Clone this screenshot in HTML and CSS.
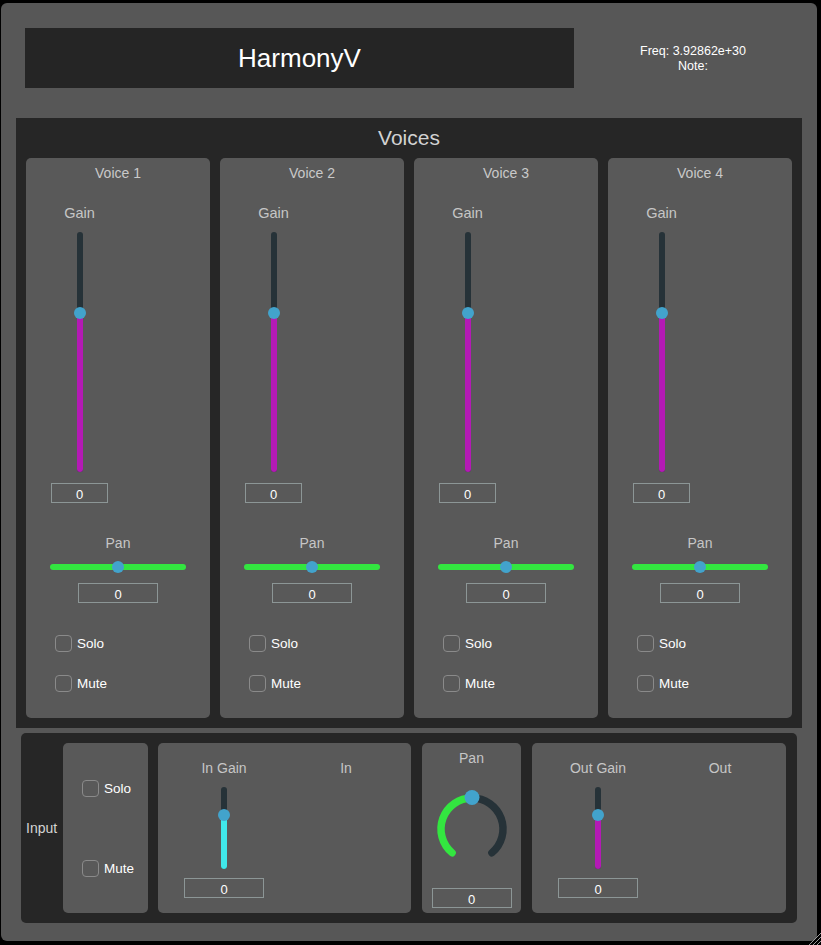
FILE: index.html
```html
<!DOCTYPE html>
<html>
<head>
<meta charset="utf-8">
<link rel="stylesheet" href="styles.css">
</head>
<body>
<div class="panel">
  <div class="header">
    <div class="title-box">HarmonyV</div>
    <div class="freq">
      <div>Freq: 3.92862e+30</div>
      <div>Note:</div>
    </div>
  </div>

  <div class="voices">
    <div class="voices-title">Voices</div>
    <div class="voice-grid">
      <!-- voice 1 -->
      <div class="card voice">
        <div class="voice-title">Voice 1</div>
        <div class="gain-col">
          <div class="label gain-label">Gain</div>
          <div class="vslider tall" style="--pos:33.75%"><div class="vtrack"></div><div class="vfill magenta"></div><div class="thumb"></div></div>
          <div class="numbox small">0</div>
        </div>
        <div class="label pan-label">Pan</div>
        <div class="hslider" style="--pos:50%"><div class="htrack"></div><div class="thumb"></div></div>
        <div class="numbox pan-box">0</div>
        <label class="check solo"><span class="box"></span>Solo</label>
        <label class="check mute"><span class="box"></span>Mute</label>
      </div>
      <!-- voice 2 -->
      <div class="card voice">
        <div class="voice-title">Voice 2</div>
        <div class="gain-col">
          <div class="label gain-label">Gain</div>
          <div class="vslider tall" style="--pos:33.75%"><div class="vtrack"></div><div class="vfill magenta"></div><div class="thumb"></div></div>
          <div class="numbox small">0</div>
        </div>
        <div class="label pan-label">Pan</div>
        <div class="hslider" style="--pos:50%"><div class="htrack"></div><div class="thumb"></div></div>
        <div class="numbox pan-box">0</div>
        <label class="check solo"><span class="box"></span>Solo</label>
        <label class="check mute"><span class="box"></span>Mute</label>
      </div>
      <!-- voice 3 -->
      <div class="card voice">
        <div class="voice-title">Voice 3</div>
        <div class="gain-col">
          <div class="label gain-label">Gain</div>
          <div class="vslider tall" style="--pos:33.75%"><div class="vtrack"></div><div class="vfill magenta"></div><div class="thumb"></div></div>
          <div class="numbox small">0</div>
        </div>
        <div class="label pan-label">Pan</div>
        <div class="hslider" style="--pos:50%"><div class="htrack"></div><div class="thumb"></div></div>
        <div class="numbox pan-box">0</div>
        <label class="check solo"><span class="box"></span>Solo</label>
        <label class="check mute"><span class="box"></span>Mute</label>
      </div>
      <!-- voice 4 -->
      <div class="card voice">
        <div class="voice-title">Voice 4</div>
        <div class="gain-col">
          <div class="label gain-label">Gain</div>
          <div class="vslider tall" style="--pos:33.75%"><div class="vtrack"></div><div class="vfill magenta"></div><div class="thumb"></div></div>
          <div class="numbox small">0</div>
        </div>
        <div class="label pan-label">Pan</div>
        <div class="hslider" style="--pos:50%"><div class="htrack"></div><div class="thumb"></div></div>
        <div class="numbox pan-box">0</div>
        <label class="check solo"><span class="box"></span>Solo</label>
        <label class="check mute"><span class="box"></span>Mute</label>
      </div>
    </div>
  </div>

  <div class="bottom">
    <div class="input-label">Input</div>
    <div class="card io-checks">
      <label class="check in-solo"><span class="box"></span>Solo</label>
      <label class="check in-mute"><span class="box"></span>Mute</label>
    </div>
    <div class="card gain-card">
      <div class="gcol">
        <div class="label glabel">In Gain</div>
        <div class="vslider short" style="--pos:34%"><div class="vtrack"></div><div class="vfill cyan"></div><div class="thumb"></div></div>
        <div class="numbox gbox">0</div>
      </div>
      <div class="gcol meter-col">
        <div class="label glabel">In</div>
      </div>
    </div>
    <div class="card knob-card">
      <div class="label knob-label">Pan</div>
      <svg class="knob" width="80" height="80" viewBox="0 0 80 80">
        <path d="M20.07 63.75 A31 31 0 0 1 40 9" fill="none" stroke="#33e640" stroke-width="7.5" stroke-linecap="round"/>
        <path d="M40 9 A31 31 0 0 1 59.93 63.75" fill="none" stroke="#263238" stroke-width="7.5" stroke-linecap="round"/>
        <circle cx="40" cy="8.5" r="7.5" fill="#42a3cc"/>
      </svg>
      <div class="numbox knob-box">0</div>
    </div>
    <div class="card gain-card out-card">
      <div class="gcol">
        <div class="label glabel">Out Gain</div>
        <div class="vslider short" style="--pos:34%"><div class="vtrack"></div><div class="vfill magenta"></div><div class="thumb"></div></div>
        <div class="numbox gbox">0</div>
      </div>
      <div class="gcol meter-col">
        <div class="label glabel">Out</div>
      </div>
    </div>
  </div>
</div>
<svg class="grip" width="14" height="14" viewBox="0 0 14 14">
  <path d="M2 14 L14 2 M6 14 L14 6 M10 14 L14 10" stroke="#9a9a9a" stroke-width="1"/>
</svg>
</body>
</html>
```

FILE: styles.css
```css
* { box-sizing: border-box; }
html, body {
  margin: 0;
  padding: 0;
  background: #000;
  width: 821px;
  height: 945px;
  overflow: hidden;
  font-family: "Liberation Sans", Arial, sans-serif;
}
body { position: relative; }

.panel {
  margin: 3px 0 0 1px;
  width: 816px;
  height: 938px;
  background: #575757;
  border-radius: 6px;
  overflow: hidden;
}

.header {
  display: flex;
  padding: 25px 0 0 24px;
  height: 85px;
}
.title-box {
  width: 549px;
  height: 60px;
  background: #252525;
  color: #fff;
  font-size: 26px;
  display: flex;
  align-items: center;
  justify-content: center;
}
.freq {
  width: 238px;
  margin-top: 16px;
  color: #fff;
  font-size: 12.5px;
  line-height: 15px;
  text-align: center;
}

.voices {
  margin: 30px 0 0 15px;
  width: 786px;
  height: 610px;
  background: #262626;
  padding: 0 10px 10px 10px;
}
.voices-title {
  height: 40px;
  line-height: 40px;
  text-align: center;
  color: #d2d2d2;
  font-size: 21px;
}
.voice-grid {
  display: grid;
  grid-template-columns: repeat(4, 184px);
  gap: 10px;
}

.card {
  background: #595959;
  border-radius: 5px;
}
.voice {
  height: 560px;
  display: flex;
  flex-direction: column;
}
.voice-title {
  height: 30px;
  line-height: 30px;
  text-align: center;
  color: #c9c9c9;
  font-size: 14px;
}
.label {
  color: #c6c6c6;
  font-size: 14px;
  line-height: 20px;
  height: 20px;
  text-align: center;
  white-space: nowrap;
}
.gain-col {
  margin-left: 25px;
  width: 57px;
  display: flex;
  flex-direction: column;
  align-items: center;
}
.gain-label { margin-top: 15px; font-size: 14.5px; }
.gain-col .vslider { margin-top: 9px; }
.gain-col .numbox { margin-top: 11px; }

.vslider {
  position: relative;
  width: 12px;
}
.vslider.tall { height: 240px; }
.vslider.short { height: 82px; }
.vtrack {
  position: absolute;
  left: 3px;
  top: 0;
  bottom: 0;
  width: 6px;
  border-radius: 3px;
  background: #263238;
}
.vfill {
  position: absolute;
  left: 3px;
  width: 6px;
  top: var(--pos);
  bottom: 0;
  border-radius: 0 0 3px 3px;
}
.magenta { background: #b41ab5; }
.cyan { background: #40e8ea; }
.thumb {
  position: absolute;
  width: 12px;
  height: 12px;
  border-radius: 50%;
  background: #42a3cc;
}
.vslider .thumb {
  left: 0;
  top: calc(var(--pos) - 6px);
}

.numbox {
  height: 20px;
  border: 1px solid #8c9696;
  color: #fff;
  font-size: 13px;
  line-height: 19px;
  padding-top: 1px;
  text-align: center;
}
.numbox.small { width: 57px; }

.pan-label { margin-top: 30px; }
.hslider {
  position: relative;
  margin: 8px 24px 0 24px;
  height: 12px;
}
.htrack {
  position: absolute;
  left: 0;
  right: 0;
  top: 3px;
  height: 6px;
  border-radius: 3px;
  background: #33e640;
}
.hslider .thumb {
  top: 0;
  left: calc(var(--pos) - 6px);
}
.pan-box {
  width: 80px;
  margin: 10px auto 0 auto;
}

.check {
  display: flex;
  align-items: center;
  height: 17px;
  color: #fff;
  font-size: 13.5px;
}
.check .box {
  width: 17px;
  height: 17px;
  border: 1.5px solid #8a8a8a;
  border-radius: 4px;
  margin-right: 5px;
  flex: none;
}
.voice .check { margin-left: 29px; }
.voice .solo { margin-top: 32px; }
.voice .mute { margin-top: 23px; }

.bottom {
  margin: 5px 0 0 20px;
  width: 776px;
  height: 190px;
  background: #262626;
  border-radius: 5px;
  padding: 10px 11px 10px 5px;
  display: flex;
  align-items: stretch;
}
.input-label {
  width: 32px;
  margin-right: 5px;
  align-self: center;
  color: #d4d4d4;
  font-size: 14px;
}
.io-checks {
  width: 85px;
  padding: 37px 0 0 19px;
  display: flex;
  flex-direction: column;
}
.in-mute { margin-top: 63px; }

.gain-card {
  width: 253px;
  margin-left: 10px;
  display: flex;
  padding-left: 26px;
}
.out-card { width: 254px; margin-left: 11px; }
.gcol {
  width: 80px;
  display: flex;
  flex-direction: column;
  align-items: center;
}
.meter-col { margin-left: 42px; }
.glabel { margin-top: 15px; }
.gcol .vslider { margin-top: 9px; }
.gbox { width: 80px; margin-top: 9px; }

.knob-card {
  width: 99px;
  margin-left: 11px;
  display: flex;
  flex-direction: column;
  align-items: center;
}
.knob-label { margin-top: 5px; }
.knob { margin-top: 21px; display: block; }
.knob-box { width: 80px; margin-top: 19px; }

.grip {
  position: absolute;
  right: 0;
  bottom: 0;
}
```
